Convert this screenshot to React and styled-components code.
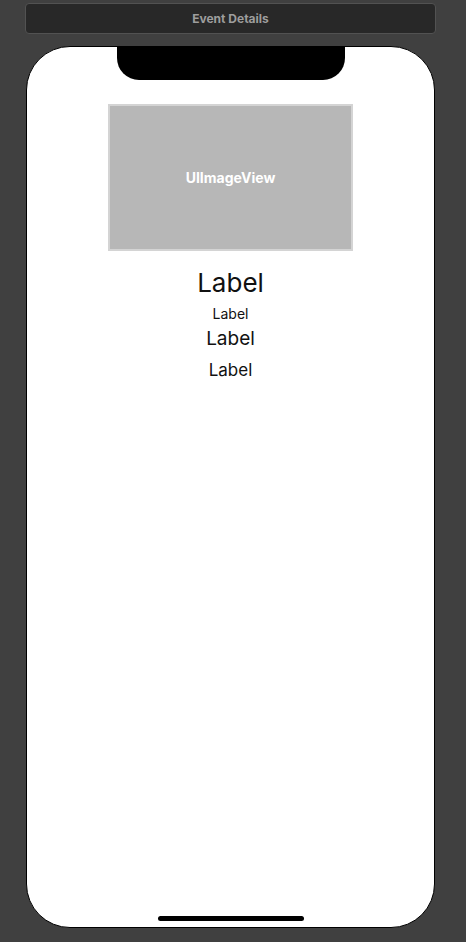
import React from "react";
import styled, { createGlobalStyle } from "styled-components";

const Global = createGlobalStyle`
  body {
    margin: 0;
    background: #404040;
    font-family: Inter, "Liberation Sans", sans-serif;
  }
`;

const Page = styled.div`
  width: 466px;
  height: 942px;
  display: flex;
  flex-direction: column;
  align-items: flex-start;
  padding: 3px 0 0 25px;
  box-sizing: border-box;
`;

const TitleBar = styled.div`
  width: 411px;
  height: 31px;
  box-sizing: border-box;
  background: #282828;
  border: 1px solid #525252;
  border-radius: 4px;
  display: flex;
  align-items: center;
  justify-content: center;
  color: #9d9d9d;
  font-size: 12px;
  font-weight: 700;
`;

const Phone = styled.div`
  position: relative;
  margin: 12px 0 0 1px;
  width: 409px;
  height: 882px;
  box-sizing: border-box;
  background: #fff;
  border: 1px solid #000;
  border-radius: 44px;
  display: flex;
  flex-direction: column;
  align-items: center;
  overflow: hidden;
`;

const Notch = styled.div`
  position: absolute;
  top: -1px;
  left: 90px;
  width: 228px;
  height: 34px;
  background: #000;
  border-radius: 0 0 22px 22px;
`;

const ImageView = styled.div`
  margin-top: 57px;
  width: 245px;
  height: 147px;
  box-sizing: border-box;
  background: #b7b7b7;
  border: 2px solid #d4d4d4;
  display: flex;
  align-items: center;
  justify-content: center;
  color: #fff;
  font-size: 14px;
  font-weight: 700;
`;

const Label = styled.div`
  color: #111;
  font-size: ${(p) => p.size}px;
  line-height: ${(p) => p.lh}px;
  margin-top: ${(p) => p.gap}px;
`;

const HomeBar = styled.div`
  margin-top: auto;
  margin-bottom: 6px;
  width: 146px;
  height: 5px;
  border-radius: 3px;
  background: #000;
`;

export default function App() {
  return (
    <Page>
      <Global />
      <TitleBar>Event Details</TitleBar>
      <Phone>
        <Notch />
        <ImageView>UIImageView</ImageView>
        <Label size={26} lh={30} gap={17}>Label</Label>
        <Label size={14} lh={18} gap={7}>Label</Label>
        <Label size={19} lh={22} gap={5}>Label</Label>
        <Label size={17} lh={20} gap={10}>Label</Label>
        <HomeBar />
      </Phone>
    </Page>
  );
}
